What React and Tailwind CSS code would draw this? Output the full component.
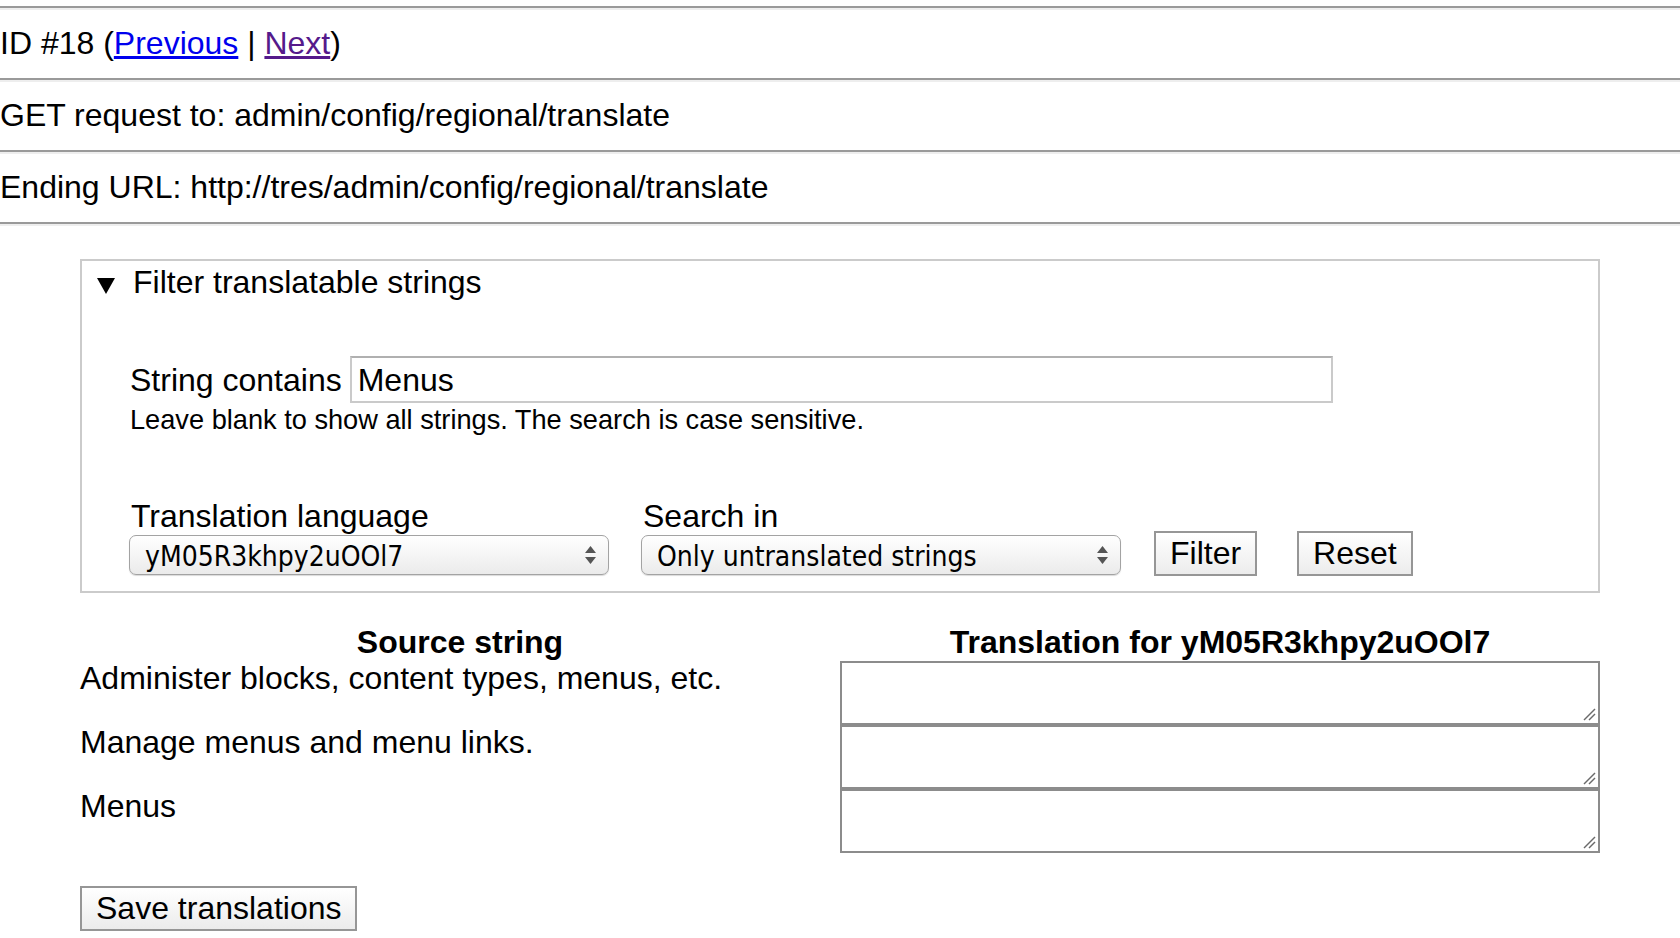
import { useState } from "react";

const rows = [
  "Administer blocks, content types, menus, etc.",
  "Manage menus and menu links.",
  "Menus",
];

function Rule({ className = "" }) {
  return <hr className={`h-0 border-t-2 border-b-2 border-t-[#9a9a9a] border-b-[#eeeeee] ${className}`} />;
}

function SelectBox({ value, options }) {
  return (
    <div className="relative w-[480px] h-[40px] mb-[1px]">
      <select
        defaultValue={value}
        className="appearance-none w-full h-full rounded-[7px] border border-[#a3a3a3] bg-gradient-to-b from-white to-[#ebebeb] shadow-[0_1px_1px_rgba(0,0,0,0.15)] pl-[15px] pr-[40px] pt-[3px] text-[28px] leading-[33px] text-black font-['DejaVu_Sans_Condensed','DejaVu_Sans',sans-serif] [font-stretch:condensed] outline-none"
      >
        {options.map((o) => (
          <option key={o}>{o}</option>
        ))}
      </select>
      {/* up/down arrows */}
      <svg
        className="absolute right-[13px] top-[11px] pointer-events-none"
        width="11"
        height="18"
        viewBox="0 0 11 18"
      >
        <polygon points="5.5,0 11,7 0,7" fill="#555" />
        <polygon points="0,11 11,11 5.5,18" fill="#555" />
      </svg>
    </div>
  );
}

function Btn({ children, className = "" }) {
  return (
    <button
      type="button"
      className={`h-[45px] px-[14px] border-2 border-[#969696] bg-gradient-to-b from-white to-[#ececec] text-[32px] leading-[37px] text-black ${className}`}
    >
      {children}
    </button>
  );
}

function TextBox() {
  return (
    <div className="relative">
      <textarea className="block w-full h-[64px] border-2 border-[#8c8c8c] outline-none resize-none" />
      {/* resize grip */}
      <svg className="absolute right-[4px] bottom-[4px] pointer-events-none" width="13" height="13" viewBox="0 0 13 13">
        <line x1="1" y1="12" x2="12" y2="1" stroke="#6a6a6a" strokeWidth="1.5" />
        <line x1="6" y1="12" x2="12" y2="6" stroke="#6a6a6a" strokeWidth="1.5" />
      </svg>
    </div>
  );
}

export default function App() {
  const [open, setOpen] = useState(true);

  return (
    <div className="min-h-screen bg-white text-black font-['Liberation_Sans',Arial,Helvetica,sans-serif] text-[32px] leading-[37px]">
      <Rule className="mt-[6px]" />
      <div className="mt-[15px] mb-[16px]">
        ID #18 (
        <a href="#" className="text-[#0000ee] underline">
          Previous
        </a>{" "}
        |{" "}
        <a href="#" className="text-[#551a8b] underline">
          Next
        </a>
        )
      </div>
      <Rule />
      <div className="mt-[15px] mb-[16px]">GET request to: admin/config/regional/translate</div>
      <Rule />
      <div className="mt-[15px] mb-[16px]">Ending URL: http://tres/admin/config/regional/translate</div>
      <Rule />

      {/* Filter fieldset */}
      <div className="mt-[33px] mx-[80px] border-2 border-[#cbcbcb] pt-[3px] pb-[15px]">
        <div
          className="flex items-center pl-[15px] cursor-pointer select-none"
          onClick={() => setOpen(!open)}
        >
          <svg className="mt-[6px]" width="18" height="16" viewBox="0 0 18 16">
            <polygon points="0,0 18,0 9,16" fill="#000" />
          </svg>
          <span className="ml-[18px]">Filter translatable strings</span>
        </div>

        {open && (
          <>
            <div className="mt-[55px] pl-[48px] flex items-baseline">
              <label>String contains</label>
              <input
                type="text"
                defaultValue="Menus"
                className="ml-[8px] w-[983px] h-[47px] border-2 border-[#cacaca] border-t-[#b0b0b0] pl-[6px] pt-[4px] pb-[2px] text-[32px] leading-[37px] outline-none"
              />
            </div>
            <div className="mt-[1px] pl-[48px] text-[27.2px] leading-[31px]">
              Leave blank to show all strings. The search is case sensitive.
            </div>

            <div className="mt-[63px] pl-[47px] flex items-end">
              <div className="flex flex-col">
                <label className="ml-[2px]">Translation language</label>
                <SelectBox value="yM05R3khpy2uOOl7" options={["yM05R3khpy2uOOl7"]} />
              </div>
              <div className="flex flex-col ml-[32px]">
                <label className="ml-[2px]">Search in</label>
                <SelectBox
                  value="Only untranslated strings"
                  options={["Both translated and untranslated strings", "Only translated strings", "Only untranslated strings"]}
                />
              </div>
              <Btn className="ml-[33px]">Filter</Btn>
              <Btn className="ml-[40px]">Reset</Btn>
            </div>
          </>
        )}
      </div>

      {/* Translation table */}
      <div className="mt-[29px] mx-[80px] grid grid-cols-2">
        <div className="font-bold text-center pt-[2px]">Source string</div>
        <div className="font-bold text-center pt-[2px]">Translation for yM05R3khpy2uOOl7</div>
        {rows.map((r) => (
          <div key={r} className="contents">
            <div className="-mt-[1px]">{r}</div>
            <TextBox />
          </div>
        ))}
      </div>

      <button
        type="button"
        className="mt-[33px] ml-[80px] mb-[20px] h-[45px] px-[14px] border-2 border-[#969696] bg-gradient-to-b from-white to-[#ececec] text-[32px] leading-[37px]"
      >
        Save translations
      </button>
    </div>
  );
}
